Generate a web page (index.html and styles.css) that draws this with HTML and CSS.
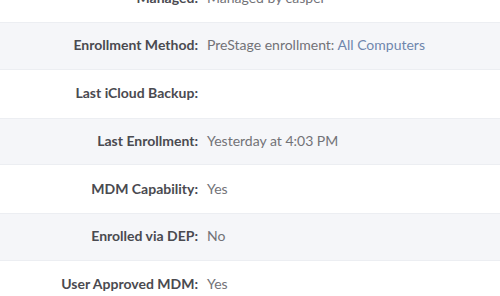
FILE: index.html
```html
<!DOCTYPE html>
<html lang="en">
  <head>
    <meta charset="utf-8" />
    <meta name="viewport" content="width=device-width, initial-scale=1.0" />
    <title>Inventory details</title>
    <link rel="stylesheet" href="styles.css">
  </head>
  <body>
    <section class="details">
      <div class="row">
        <span class="label">Managed:</span>
        <span class="value">Managed by casper</span>
      </div>
      <div class="row striped">
        <span class="label">Enrollment Method:</span>
        <span class="value">PreStage enrollment: <a href="#">All Computers</a></span>
      </div>
      <div class="row">
        <span class="label">Last iCloud Backup:</span>
        <span class="value"></span>
      </div>
      <div class="row striped">
        <span class="label">Last Enrollment:</span>
        <span class="value">Yesterday at 4:03 PM</span>
      </div>
      <div class="row">
        <span class="label">MDM Capability:</span>
        <span class="value">Yes</span>
      </div>
      <div class="row striped">
        <span class="label">Enrolled via DEP:</span>
        <span class="value">No</span>
      </div>
      <div class="row">
        <span class="label">User Approved MDM:</span>
        <span class="value">Yes</span>
      </div>
    </section>
  </body>
</html>
```

FILE: styles.css
```css
body {
  margin: 0;
  font-family: Lato, "Open Sans", sans-serif;
  font-size: 14px;
  background-color: #fff;
}

.details {
  margin-top: -25.75px;
}

.row {
  display: grid;
  grid-template-columns: 198px 1fr;
  column-gap: 9px;
  align-items: center;
  height: 47.75px;
  padding-bottom: 2px;
  box-sizing: border-box;
}

.striped {
  background-color: #f5f6f9;
  border-top: 1px solid #eceef2;
  border-bottom: 1px solid #eceef2;
}

.label {
  text-align: right;
  font-weight: bold;
  color: #4a4a50;
}

.value {
  color: #727277;
}

.value a {
  color: #6f86ad;
  text-decoration: none;
}
```
